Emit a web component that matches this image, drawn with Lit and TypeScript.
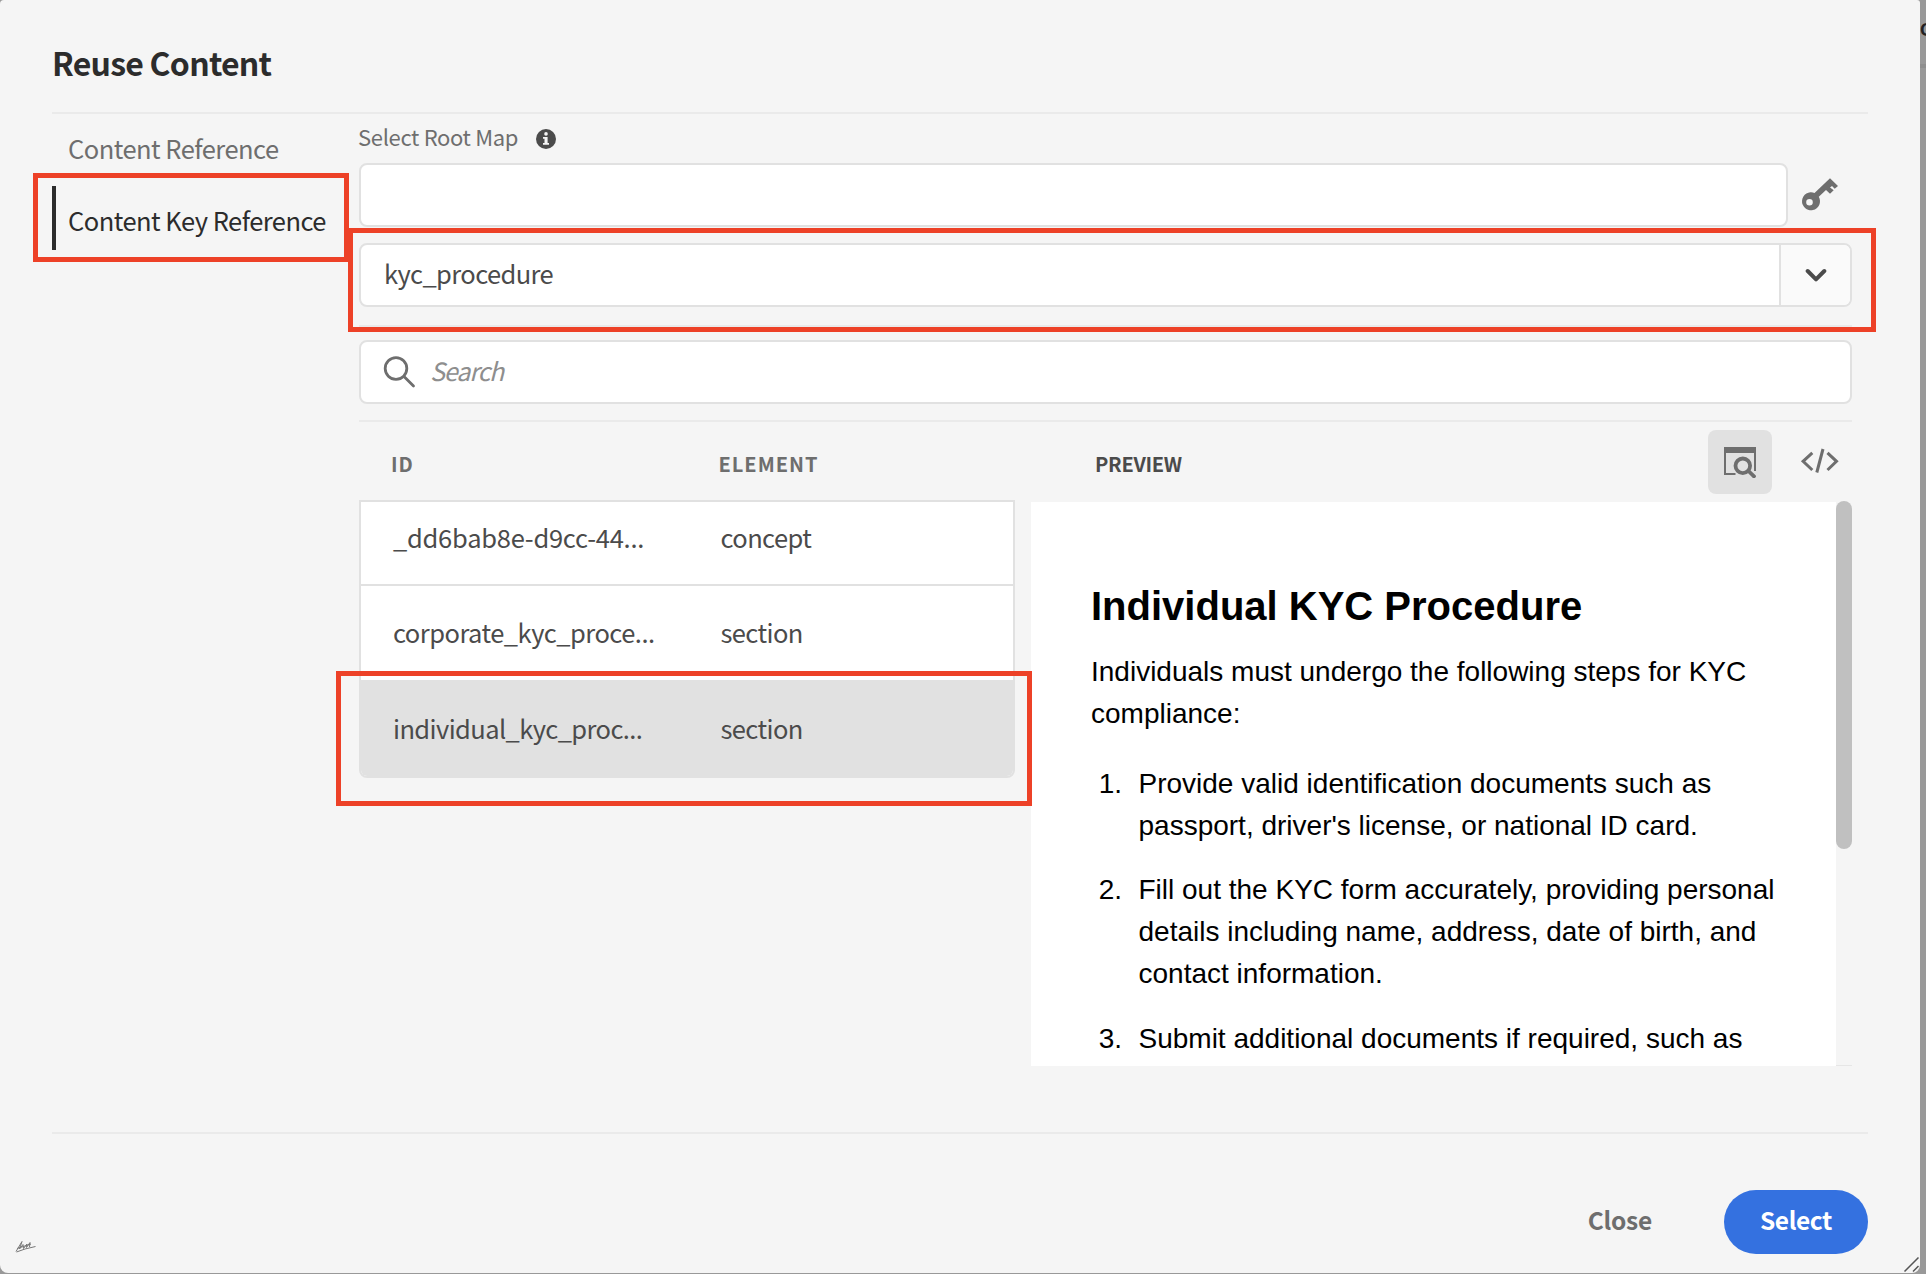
import { LitElement, html, css } from "lit";
import { customElement } from "lit/decorators.js";

interface Row { id: string; element: string; }

@customElement("app-root")
export class AppRoot extends LitElement {
  static styles = css`
    :host { display: block; }
    * { box-sizing: border-box; }
    .page { position: relative; width: 1926px; height: 1274px; overflow: hidden; background: #999;
      font-family: "Noto Sans CJK SC", "Open Sans", sans-serif; font-size: 25.5px; color: #4b4b4b; white-space: nowrap; }
    .behind { position: absolute; left: 1920px; top: 0; width: 6px; height: 68px; overflow: hidden; border-bottom: 4px solid #8f8f8f; color: #222;
      font: 700 19px/59px "Liberation Sans", sans-serif; }
    .dialog { width: 1920px; height: 1273px; background: #f5f5f5; border-radius: 4px 3px 8px 8px; padding: 0 52px; display: flex; flex-direction: column; }
    .title { height: 112px; padding-top: 12px; font-size: 32px; font-weight: 700; line-height: 100px; letter-spacing: -0.75px; color: #2c2c2c; }
    .body { height: 1022px; border-top: 2px solid #eaeaea; border-bottom: 2px solid #eaeaea; display: flex; }
    .tabs { width: 307px; display: flex; flex-direction: column; gap: 8px; letter-spacing: -0.53px; }
    .tab { height: 64px; padding: 4px 0 0 12px; border-left: 4px solid transparent; line-height: 60px; color: #6e6e6e; }
    .tab.on { border-color: #2c2c2c; color: #2c2c2c; }
    .main { width: 1493px; display: flex; flex-direction: column; }
    .label { height: 49px; margin-left: -1px; line-height: 44px; font-size: 22px; letter-spacing: -0.33px; color: #6e6e6e; display: flex; gap: 18px; }
    .label svg { margin-top: 15px; }
    .field { height: 64px; flex: none; background: #fff; border: 2px solid #e1e1e1; border-radius: 8px; display: flex; align-items: center; overflow: hidden; }
    .rootrow { display: flex; gap: 12px; }
    .rootrow .field { width: 1429px; }
    .rootrow svg { margin-top: 13px; }
    .combo { margin-top: 16px; padding-left: 23px; justify-content: space-between; letter-spacing: -0.6px; }
    .field span { padding-bottom: 5px; }
    .drop { width: 71px; height: 60px; border-left: 2px solid #e1e1e1; background: #fafafa; display: grid; place-items: center; }
    .rule { height: 2px; background: #eaeaea; margin: 18px 0 13px; flex: none; }
    .rule.low { margin: 16px 0 0; }
    .search { padding-left: 22px; gap: 14px; font-style: italic; font-size: 25px; letter-spacing: -1.1px; color: #8e8e8e; }
    .split { display: flex; gap: 16px; }
    .left { width: 656px; }
    .cols, .row { display: grid; grid-template-columns: 327.5px 1fr; }
    .cols { height: 78px; padding: 3px 0 0 32px; line-height: 78px; font-size: 20px; font-weight: 700; letter-spacing: 1px; color: #6e6e6e; }
    .table { border: 2px solid #e1e1e1; border-radius: 0 0 8px 8px; background: #fff; overflow: hidden; }
    .row { height: 96px; padding-left: 32px; line-height: 95px; letter-spacing: -0.6px; }
    .row:first-child { height: 84px; line-height: 69px; border-bottom: 2px solid #e1e1e1; }
    .row:first-child .id { letter-spacing: -0.25px; }
    .row:nth-child(2) { height: 94px; line-height: 92px; }
    .row:nth-child(2) .id { letter-spacing: -0.52px; }
    .row.on { background: #e1e1e1; }
    .right { width: 821px; }
    .phead { height: 80px; padding: 8px 0 0 64px; display: flex; }
    .ptitle { width: 613px; line-height: 67px; font-size: 20px; font-weight: 700; letter-spacing: -0.3px; }
    .toggle { width: 64px; height: 64px; border-radius: 8px; background: #e1e1e1; display: grid; place-items: center; margin-right: 28px; }
    .code { margin-top: 16px; }
    .pane { display: flex; height: 564px; }
    .doc { width: 805px; height: 564px; overflow: hidden; background: #fff; padding: 73px 56px 0 60px; color: #000; font: 28px/42px "Liberation Sans", Arial, sans-serif; }
    .doc h1 { margin: 0; font-size: 40px; line-height: 62px; font-weight: 700; }
    .doc p { margin: 14px 0 28px; }
    .doc ol { margin: 0; padding: 0; list-style: none; }
    .doc li { display: grid; grid-template-columns: 31px 1fr; column-gap: 16.5px; margin-bottom: 22.4px; }
    .num { text-align: right; }
    .track { width: 16px; border-bottom: 1px solid #e6e6e6; }
    .thumb { width: 16px; height: 348px; margin-top: -1px; border-radius: 8px; background: #c0c0c0; }
    .foot { height: 138px; padding-top: 56px; display: flex; justify-content: flex-end; font-weight: 700; line-height: 59px; font-size: 24.5px; }
    .close { color: #6e6e6e; margin-right: 72px; letter-spacing: -0.2px; }
    .select { width: 144px; height: 64px; border-radius: 32px; background: #3471e0; color: #fff; text-align: center; letter-spacing: -0.4px; }
    .mark { position: absolute; border: 5px solid #ed4127; }
    .m1 { left: 33px; top: 173px; width: 316px; height: 89px; }
    .m2 { left: 348px; top: 228px; width: 1528px; height: 104px; }
    .m3 { left: 336px; top: 671px; width: 696px; height: 135px; }
    .grip { position: absolute; left: 1900px; top: 1254px; }
    .sign { position: absolute; left: 14px; top: 1238px; }
  `;

  private selected = 2;
  private rows: Row[] = [
    { id: "_dd6bab8e-d9cc-44...", element: "concept" },
    { id: "corporate_kyc_proce...", element: "section" },
    { id: "individual_kyc_proc...", element: "section" },
  ];
  private steps = [
    ["Provide valid identification documents such as", "passport, driver's license, or national ID card."],
    ["Fill out the KYC form accurately, providing personal", "details including name, address, date of birth, and", "contact information."],
    ["Submit additional documents if required, such as"],
  ];

  render() {
    return html`<div class="page">
      <div class="behind">C</div>
      <div class="dialog">
        <div class="title">Reuse Content</div>
        <div class="body">
          <div class="tabs">
            <div class="tab">Content Reference</div>
            <div class="tab on">Content Key Reference</div>
          </div>
          <div class="main">
            <div class="label"><span>Select Root Map</span>
              <svg width="20" height="20" viewBox="0 0 20 20"><circle cx="10" cy="10" r="10" fill="#4b4b4b"/><circle cx="10" cy="4.9" r="1.8" fill="#f5f5f5"/><path d="M7 8h4.6v6H13v1.7H7V14h1.500V9.700H7z" fill="#f5f5f5"/></svg>
            </div>
            <div class="rootrow"><div class="field"></div>
              <svg width="40" height="38" viewBox="0 0 40 38"><path fill="#6e6e6e" fill-rule="evenodd" d="M14.500 17 30 2.300 38 10 34.700 12.700 32 10 30 11.500 33.700 14.300 30 17.700 26 14 18.800 20.800A9 9 0 1 1 14.500 17zM9.500 23A3.300 3.300 0 1 0 9.500 29.600 3.300 3.300 0 0 0 9.500 23z"/></svg>
            </div>
            <div class="field combo"><span>kyc_procedure</span><div class="drop">
              <svg width="22" height="16" viewBox="0 0 22 16"><path d="M2.700 4 11 12.300 19.300 4" fill="none" stroke="#4b4b4b" stroke-width="4" stroke-linecap="round" stroke-linejoin="round"/></svg></div></div>
            <div class="rule"></div>
            <div class="field search">
              <svg width="33" height="33" viewBox="0 0 33 33"><g fill="none" stroke="#6e6e6e" stroke-width="2.800" stroke-linecap="round"><circle cx="13" cy="12.500" r="10.800"/><path d="M21 20.500 30.500 30"/></g></svg>
              <span>Search</span></div>
            <div class="rule low"></div>
            <div class="split">
              <div class="left">
                <div class="cols"><span>ID</span><span>ELEMENT</span></div>
                <div class="table">${this.rows.map((r, i) => html`<div class="row ${i === this.selected ? "on" : ""}"><span class="id">${r.id}</span><span>${r.element}</span></div>`)}</div>
              </div>
              <div class="right">
                <div class="phead"><span class="ptitle">PREVIEW</span>
                  <div class="toggle"><svg width="32" height="32" viewBox="0 0 32 32"><path d="M1 6V28H11.500M31 6V25" fill="none" stroke="#6e6e6e" stroke-width="2"/><path d="M0 1H32V7H0z" fill="#6e6e6e"/><g fill="none" stroke="#6e6e6e" stroke-width="3.800" stroke-linecap="round"><circle cx="18.800" cy="19.800" r="7.300"/><path d="M24.500 25 30 30.300"/></g></svg></div>
                  <svg class="code" width="40" height="32" viewBox="0 0 40 32"><path d="M12.300 6.800 3.100 15.300 12.300 24M23 3 16.800 26.500M27.500 6.800 36.500 15.300 27.500 24" fill="none" stroke="#6e6e6e" stroke-width="3"/></svg>
                </div>
                <div class="pane">
                  <div class="doc"><h1>Individual KYC Procedure</h1>
                    <p>Individuals must undergo the following steps for KYC<br>compliance:</p>
                    <ol>${this.steps.map((s, i) => html`<li><span class="num">${i + 1}.</span><span>${s.map((l, j) => html`${j ? html`<br>` : ""}${l}`)}</span></li>`)}</ol>
                  </div>
                  <div class="track"><div class="thumb"></div></div>
                </div>
              </div>
            </div>
          </div>
        </div>
        <div class="foot"><span class="close">Close</span><div class="select">Select</div></div>
      </div>
      <div class="mark m1"></div><div class="mark m2"></div><div class="mark m3"></div>
      <svg class="grip" width="20" height="20" viewBox="0 0 20 20"><path d="M4.500 17.500 18.500 3.500M13 17.500 18.500 12" stroke="#555" stroke-width="1.500"/></svg>
      <svg class="sign" width="24" height="16" viewBox="0 0 24 16"><path d="M2 13.500 8 3.500 5.500 11 9 6.500 9.500 10.500 13 6 12.500 9.500 16 4.500 15.500 9M2.500 14 11 11 21.500 8.500M3 10.500 17 6" fill="none" stroke="#777" stroke-width="1"/></svg>
    </div>`;
  }
}
